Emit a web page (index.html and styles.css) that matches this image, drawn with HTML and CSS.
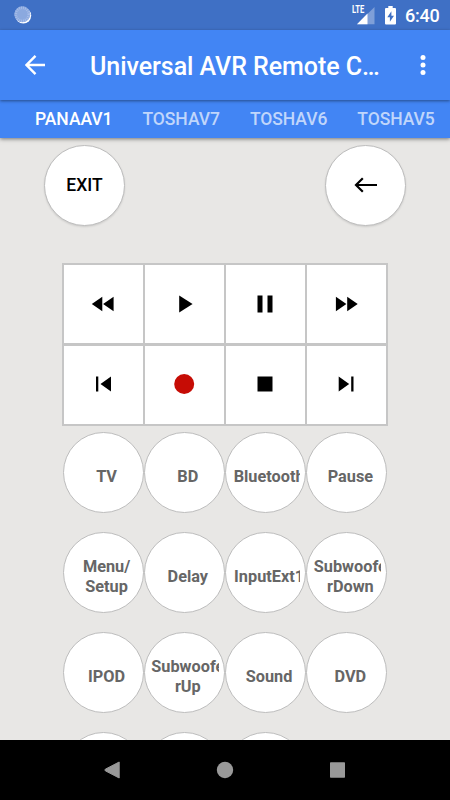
FILE: index.html
```html
<!DOCTYPE html>
<html lang="en">
<head>
<meta charset="utf-8">
<title>Universal AVR Remote Control</title>
<link rel="stylesheet" href="styles.css">
</head>
<body>
<div class="screen">
  <header class="status">
    <svg class="sync" width="18" height="18" viewBox="0 0 18 18"><circle cx="9.3" cy="9.6" r="7.9" fill="#fff"/><circle cx="8.3" cy="8.3" r="8" fill="#8ba9df"/><circle cx="8.3" cy="8.3" r="6.5" fill="none" stroke="#a6bce8" stroke-width="2.6" stroke-dasharray="1 1.04"/></svg>
    <svg class="signal" width="24" height="20" viewBox="0 0 24 20"><path d="M22.500 2v17.200H5z" fill="#7f9fd8"/><path d="M15.500 8.500v10.700H5z" fill="#fff"/></svg>
    <span class="lte">LTE</span>
    <svg class="battery" width="11" height="19" viewBox="0 0 11 19"><path d="M3.300 0h4.400v2H10q1 0 1 1v14.500q0 1-1 1H1q-1 0-1-1V3q0-1 1-1h2.300z" fill="#fff"/><path d="M6.400 5.200L2.300 11.200h2.600v4.500L9 9.700H6.400z" fill="#3f70c5"/></svg>
    <span class="clock">6:40</span>
  </header>
  <div class="appbar">
    <svg class="back" width="20" height="20" viewBox="0 0 20 20"><path d="M20 10H1.600M10.500 .9L1.500 10l9 9.100" fill="none" stroke="#fff" stroke-width="2.400"/></svg>
    <h1>Universal AVR Remote C…</h1>
    <svg class="more" width="6" height="20" viewBox="0 0 6 20" fill="#fff"><circle cx="3" cy="2.600" r="2.500"/><circle cx="3" cy="10" r="2.500"/><circle cx="3" cy="17.400" r="2.500"/></svg>
  </div>
  <nav class="tabs"><span class="active">PANAAV1</span><span>TOSHAV7</span><span>TOSHAV6</span><span>TOSHAV5</span></nav>
  <main>
    <div class="top">
      <div class="round raised">EXIT</div>
      <div class="round raised"><svg width="24" height="16" viewBox="0 0 24 16"><path d="M23 8H2M8.800 1.200L2 8l6.800 6.800" fill="none" stroke="#000" stroke-width="2.200"/></svg></div>
    </div>
    <div class="media">
      <div><svg viewBox="0 0 30 30"><path d="M14.300 7.800v14.400L3.800 15zM25.600 7.800v14.400L15.100 15z"/></svg></div>
      <div><svg viewBox="0 0 30 30"><path d="M10.200 6.500v17L23.600 15z"/></svg></div>
      <div><svg viewBox="0 0 30 30"><path d="M7.500 6.500h5v17h-5zM17.500 6.500h5v17h-5z"/></svg></div>
      <div><svg viewBox="0 0 30 30"><path d="M4.900 7.800v14.400L15.400 15zM16.200 7.800v14.400L26.700 15z"/></svg></div>
      <div><svg viewBox="0 0 30 30"><path d="M8 7.500h2.300v15H8zM23 7.500v15L12.500 15z"/></svg></div>
      <div><svg viewBox="0 0 30 30"><circle cx="15.200" cy="15" r="10" fill="#c60c05"/></svg></div>
      <div><svg viewBox="0 0 30 30"><path d="M7.500 7.500h15v15h-15z"/></svg></div>
      <div><svg viewBox="0 0 30 30"><path d="M7.700 7.500v15L18.200 15zM20.200 7.500h2.300v15h-2.300z"/></svg></div>
    </div>
    <div class="keys">
      <div class="round"><div class="label"><span>TV</span></div></div>
      <div class="round"><div class="label"><span>BD</span></div></div>
      <div class="round"><div class="label"><span>Bluetooth</span></div></div>
      <div class="round"><div class="label"><span>Pause</span></div></div>
      <div class="round"><div class="label"><span>Menu/</span><span>Setup</span></div></div>
      <div class="round"><div class="label"><span>Delay</span></div></div>
      <div class="round"><div class="label"><span>InputExt1</span></div></div>
      <div class="round"><div class="label"><span>Subwoofe</span><span>rDown</span></div></div>
      <div class="round"><div class="label"><span>IPOD</span></div></div>
      <div class="round"><div class="label"><span>Subwoofe</span><span>rUp</span></div></div>
      <div class="round"><div class="label"><span>Sound</span></div></div>
      <div class="round"><div class="label"><span>DVD</span></div></div>
      <div class="round"></div>
      <div class="round"></div>
      <div class="round"></div>
    </div>
  </main>
  <footer class="navbar">
    <svg width="450" height="60" viewBox="0 0 450 60" fill="#999"><path d="M119.200 22v16L105.300 30.800q-1-.8 0-1.600L119.200 22z" stroke="#999" stroke-linejoin="round"/><circle cx="225" cy="30" r="8.200"/><rect x="330" y="22.200" width="15" height="15.600" rx=".7"/></svg>
  </footer>
</div>
</body>
</html>
```
FILE: styles.css
```css
* { box-sizing: border-box; }
body { margin: 0; font-family: Roboto, "Liberation Sans", sans-serif; }
.screen { width: 450px; height: 800px; overflow: hidden; display: flex; flex-direction: column; background: #e8e7e5; }
.status { height: 30px; flex: none; display: flex; background: #3f70c5; color: #fff; position: relative; }
.sync { margin: 6px 0 0 14px; }
.signal { margin: 5px 0 0 320px; }
.lte { position: absolute; left: 352px; top: 4px; font-size: 10px; line-height: 12px; font-weight: 700; transform: scaleX(.76); transform-origin: left; }
.battery { margin: 6px 0 0 9px; }
.clock { margin-left: 9px; font-size: 18px; line-height: 31px; font-weight: 500; letter-spacing: -.2px; }
.appbar { height: 70px; flex: none; display: flex; align-items: center; background: #4285f4; box-shadow: 0 1px 3px rgba(0,0,0,.45); position: relative; z-index: 2; }
.back { margin-left: 25px; }
h1 { margin: 3px 0 0 45px; width: 291px; font-size: 25px; font-weight: 500; line-height: 34px; letter-spacing: -.05px; color: #fff; white-space: nowrap; }
.more { margin-left: 38.500px; }
.tabs { height: 37.500px; flex: none; display: flex; gap: 30px; padding-left: 35px; background: #4285f4; box-shadow: 0 1px 4px rgba(0,0,0,.5); color: #c0d6fb; font-size: 17.500px; font-weight: 500; line-height: 39px; letter-spacing: -.05px; white-space: nowrap; position: relative; z-index: 1; }
.tabs .active { color: #fff; }
main { flex: 1; min-height: 0; overflow: hidden; }
.top { display: flex; justify-content: space-between; padding: 7px 44px 0; }
.round { width: 81px; height: 81px; border-radius: 50%; border: 1px solid #bdbdbd; background: #fff; display: flex; align-items: center; justify-content: center; }
.raised { font-size: 17.500px; font-weight: 500; color: #000; box-shadow: 0 1px 2px rgba(0,0,0,.12); }
.media { width: 326px; height: 163px; margin: 37.500px auto 0; display: grid; grid-template-columns: repeat(4, 1fr); grid-template-rows: 1fr 1fr; gap: 2.500px; padding: 2px; background: #c6c6c6; }
.media > div { background: #fff; display: flex; align-items: center; justify-content: center; }
.media svg { width: 30px; height: 30px; margin: -1px 1px 0 0; }
.keys { margin: 6px 0 0 62.600px; display: grid; grid-template-columns: repeat(4, 81.250px); grid-auto-rows: 100px; }
.label { width: 74px; height: 79px; margin-right: 5px; padding: 8px 0 0 12px; flex: none; overflow: hidden; display: flex; flex-direction: column; align-items: center; justify-content: center; font-size: 16.300px; font-weight: 700; line-height: 19.500px; color: #666; white-space: nowrap; }
.navbar { height: 60px; flex: none; background: #000; }
.navbar svg { display: block; }
```
